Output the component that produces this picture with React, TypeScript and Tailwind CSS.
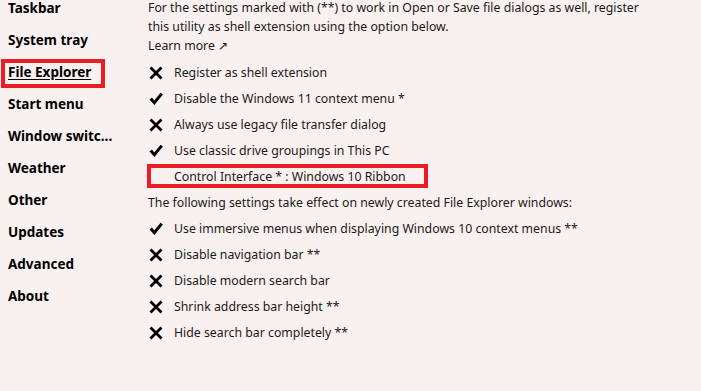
import React from "react";

const XIcon = () => (
  <svg width="16" height="16" viewBox="0 0 16 16" className="shrink-0">
    <path d="M2.5 2.5 L13.5 13.5 M13.5 2.5 L2.5 13.5" stroke="#000" strokeWidth="2.8" strokeLinecap="butt" />
  </svg>
);

const CheckIcon = () => (
  <svg width="16" height="16" viewBox="0 0 16 16" className="shrink-0">
    <path d="M1.5 8.5 L4 6.5 L6.2 9.6 L12.6 1.8 L15 3.6 L6.4 14 Z" fill="#000" />
  </svg>
);

const navItems = [
  "Taskbar",
  "System tray",
  "File Explorer",
  "Start menu",
  "Window switc...",
  "Weather",
  "Other",
  "Updates",
  "Advanced",
  "About",
];

type Row = { icon: "x" | "check" | "none"; text: string; boxed?: boolean };

const rowsA: Row[] = [
  { icon: "x", text: "Register as shell extension" },
  { icon: "check", text: "Disable the Windows 11 context menu *" },
  { icon: "x", text: "Always use legacy file transfer dialog" },
  { icon: "check", text: "Use classic drive groupings in This PC" },
  { icon: "none", text: "Control Interface * : Windows 10 Ribbon", boxed: true },
];

const rowsB: Row[] = [
  { icon: "check", text: "Use immersive menus when displaying Windows 10 context menus **" },
  { icon: "x", text: "Disable navigation bar **" },
  { icon: "x", text: "Disable modern search bar" },
  { icon: "x", text: "Shrink address bar height **" },
  { icon: "x", text: "Hide search bar completely **" },
];

function OptionRow({ r }: { r: Row }) {
  return (
    <div className="relative flex h-[26px] items-center">
      <div className="flex w-[26px] justify-start">
        {r.icon === "x" ? <XIcon /> : r.icon === "check" ? <CheckIcon /> : <span className="w-4" />}
      </div>
      <span>{r.text}</span>
      {r.boxed && (
        <div className="pointer-events-none absolute left-[-1px] top-[0px] h-[24px] w-[281px] border-[4px] border-[#ea1c24]" />
      )}
    </div>
  );
}

export default function App() {
  return (
    <div
      className="h-[391px] w-[701px] overflow-hidden bg-[#f9f1ef] text-[12.3px] text-[#1a1a1a]"
      style={{ fontFamily: '"Noto Sans", "Open Sans", sans-serif' }}
    >
      <div className="flex">
        <div className="mt-[-8px] flex w-[148px] shrink-0 flex-col">
          {navItems.map((n) => (
            <div key={n} className="relative flex h-8 items-center pl-2 text-[13.5px] font-bold text-black">
              <span className={n === "File Explorer" ? "underline underline-offset-2" : ""}>{n}</span>
              {n === "File Explorer" && (
                <div className="pointer-events-none absolute left-[1px] top-[3px] h-[29px] w-[104px] border-[4px] border-[#ea1c24]" />
              )}
            </div>
          ))}
        </div>
        <div className="mt-[-2px] flex flex-col">
          <div className="leading-[19px]">
            <div>For the settings marked with (**) to work in Open or Save file dialogs as well, register</div>
            <div>this utility as shell extension using the option below.</div>
            <div>Learn more ↗</div>
          </div>
          <div className="mt-[5px] flex flex-col">
            {rowsA.map((r) => (
              <OptionRow key={r.text} r={r} />
            ))}
            <div className="flex h-[26px] items-center">
              The following settings take effect on newly created File Explorer windows:
            </div>
            {rowsB.map((r) => (
              <OptionRow key={r.text} r={r} />
            ))}
          </div>
        </div>
      </div>
    </div>
  );
}
